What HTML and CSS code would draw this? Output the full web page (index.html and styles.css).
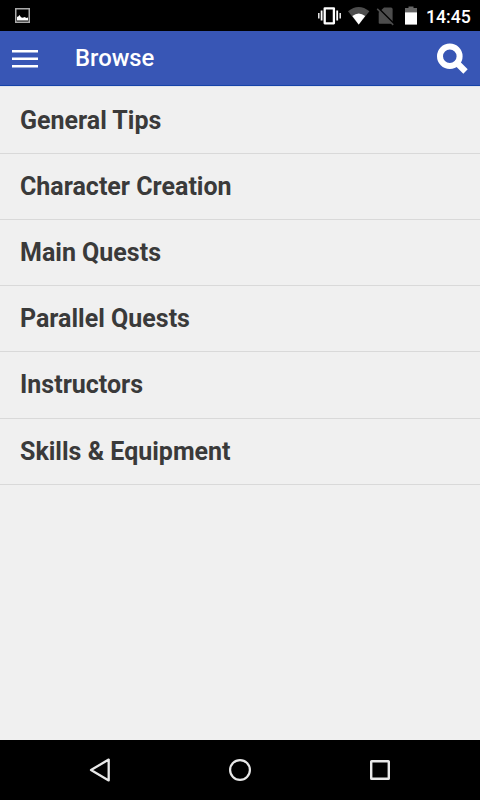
FILE: index.html
```html
<!DOCTYPE html>
<html lang="en">
<head>
    <meta charset="utf-8">
    <title>Browse</title>
    <link rel="stylesheet" href="styles.css">
</head>
<body>
    <div class="screen">
        <div class="status-bar">
            <svg class="picture-icon" width="15" height="15" viewBox="0 0 15 15">
                <rect x=".75" y=".75" width="13.5" height="13.5" fill="none" stroke="#aaa" stroke-width="1.5"/>
                <path d="M2 12.6V8.8L3 8.8L4.5 7L6 9.2L7.5 9.8L10 9L11 10L13 9.6V12.6Z" fill="#fff"/>
            </svg>
            <!-- vibrate, wifi, no sim, battery -->
            <svg class="status-icons" width="102" height="31" viewBox="316 0 102 31">
                <path d="M324.7 8.3h9.2v15h-9.2z" fill="none" stroke="#fff" stroke-width="2.3" stroke-linejoin="round"/>
                <path d="M321.6 10.5v10M337.2 10.5v10" stroke="#fff" stroke-width="1.8"/>
                <path d="M318.8 13v5.5M340.2 13v5.5" stroke="#eee" stroke-width="1.5"/>
                <path d="M348 11.2Q358.7 2.6 369.4 11.2L358.7 24.8Z" fill="#4d4d4d"/>
                <path d="M352.3 16Q358.7 10.8 365.2 16L358.7 24.6Z" fill="#fff"/>
                <path d="M384 7.5h7q1.6 0 1.6 1.6v14.6h-13q-.9 0-.9-1V12.5z" fill="#4d4d4d"/>
                <path d="M377.5 7.5L394 24" stroke="#000" stroke-width="2"/>
                <path d="M377.2 8.9L393.2 24.9" stroke="#4d4d4d" stroke-width="1.5"/>
                <path d="M408.5 6.5h5v1.5h3.5v4.5h-12v-4.5h3.5z" fill="#666"/>
                <path d="M405 12.3h12v12.3h-12z" fill="#fff"/>
            </svg>
            <span class="clock">14:45</span>
        </div>

        <div class="header">
            <svg class="menu-icon" width="26" height="20" viewBox="0 0 26 20">
                <path d="M0 2.3h26M0 9.7h26M0 17.2h26" stroke="#fff" stroke-width="2.5"/>
            </svg>
            <h1>Browse</h1>
            <svg class="search-icon" width="32" height="32" viewBox="436 42 32 32">
                <circle cx="449.8" cy="56.2" r="9.8" fill="none" stroke="#fff" stroke-width="6"/>
                <path d="M456.5 62.5L465.5 71.5" stroke="#fff" stroke-width="6.2"/>
            </svg>
        </div>

        <ul class="list">
            <li>General Tips</li>
            <li>Character Creation</li>
            <li>Main Quests</li>
            <li>Parallel Quests</li>
            <li>Instructors</li>
            <li>Skills &amp; Equipment</li>
        </ul>

        <div class="nav-bar">
            <svg width="24" height="26" viewBox="0 0 24 26">
                <path d="M3 13L20.7 2.6V23.4Z" fill="none" stroke="#e8e8e8" stroke-width="2.3" stroke-linejoin="round"/>
            </svg>
            <svg width="24" height="26" viewBox="0 0 24 26">
                <circle cx="12" cy="13" r="9.9" fill="none" stroke="#e8e8e8" stroke-width="2.2"/>
            </svg>
            <svg width="24" height="26" viewBox="0 0 24 26">
                <rect x="3.2" y="4.2" width="17.6" height="17.6" rx=".4" fill="none" stroke="#e8e8e8" stroke-width="2.4"/>
            </svg>
        </div>
    </div>
</body>
</html>
```

FILE: styles.css
```css
body {
    margin: 0;
    background-color: #f0f0f0;
    font-family: Roboto, sans-serif;
}

svg {
    display: block;
}

.screen {
    display: flex;
    flex-direction: column;
    height: 800px;
    width: 480px;
    overflow: hidden;
}

.status-bar {
    display: flex;
    align-items: center;
    box-sizing: border-box;
    height: 31px;
    padding: 0 10px 0 15px;
    background-color: #000;
}
.status-icons {
    margin-left: auto;
}
.clock {
    width: 44px;
    margin-left: 8px;
    padding-top: 3px;
    color: #fff;
    font-size: 17.7px;
    font-weight: 500;
    line-height: 22px;
    white-space: nowrap;
}

.header {
    display: flex;
    align-items: center;
    box-sizing: border-box;
    height: 55px;
    padding: 0 12px;
    background-color: #3856b5;
    border-bottom: 1px solid #1543a8;
}
.menu-icon {
    margin-top: 1px;
}
.header h1 {
    margin: 0 0 0 37px;
    color: #fff;
    font-size: 23.8px;
    font-weight: 500;
    line-height: 28px;
}
.search-icon {
    margin-left: auto;
}

.list {
    flex: 1;
    margin: 0;
    padding: 0.6px 0 0;
    list-style: none;
    border-top: 1px solid #e0e3ec;
}
.list li {
    box-sizing: border-box;
    height: 66.2px;
    padding-left: 20px;
    border-bottom: 1px solid #d9d9d9;
    color: #3a3a3a;
    font-size: 25px;
    font-weight: 700;
    line-height: 65.6px;
}

.nav-bar {
    display: flex;
    justify-content: center;
    align-items: center;
    gap: 116px;
    height: 60px;
    background-color: #000;
}
```
